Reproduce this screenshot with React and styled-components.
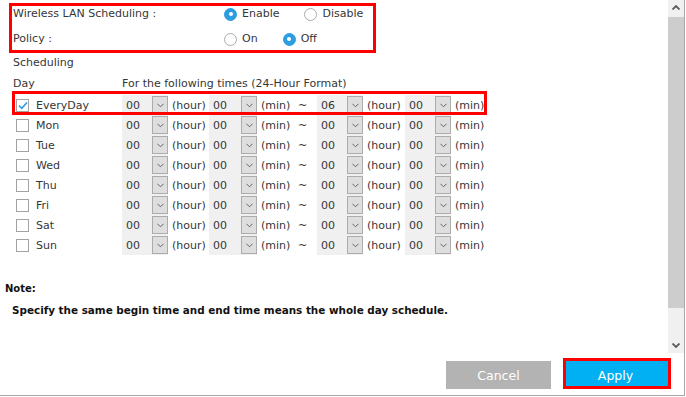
import React from 'react';
import styled, { createGlobalStyle } from 'styled-components';

const GlobalStyle = createGlobalStyle`
  html, body {
    margin: 0;
    padding: 0;
    background: #fff;
  }
  body {
    font-family: "DejaVu Sans", Verdana, sans-serif;
    font-size: 11px;
    color: #363636;
  }
`;

const DAYS = ['EveryDay', 'Mon', 'Tue', 'Wed', 'Thu', 'Fri', 'Sat', 'Sun'];

const Frame = styled.div`
  width: 685px;
  height: 396px;
  box-sizing: border-box;
  border-right: 1px solid #a8a8a8;
  border-bottom: 1px solid #a8a8a8;
  display: flex;
  flex-direction: column;
`;

const Body = styled.div`
  display: flex;
  height: 353px;
  flex-shrink: 0;
`;

const Main = styled.div`
  flex: 1;
  padding-top: 3px;
  overflow: hidden;
`;

// red annotation box around the first settings
const Marked = styled.div`
  margin-left: 9px;
  width: 367px;
  box-sizing: border-box;
  border: 3px solid #ff0000;
  padding: 0 0 3px 1px;
  display: flex;
  flex-direction: column;
  gap: 9px;
`;

const OptionRow = styled.div`
  display: flex;
  align-items: center;
  height: 16px;
  line-height: 16px;
  white-space: nowrap;
`;

const FieldLabel = styled.span`
  width: 211px;
  flex-shrink: 0;
`;

const Option = styled.label`
  display: flex;
  align-items: center;
  flex-shrink: 0;
  gap: 5px;
  margin-right: 25px;

  &:last-child {
    margin-right: 0;
  }
`;

const Radio = styled.span`
  width: 13px;
  height: 13px;
  flex-shrink: 0;
  box-sizing: border-box;
  border-radius: 50%;
  display: flex;
  align-items: center;
  justify-content: center;
  background: ${p => (p.checked ? '#2c9de0' : '#fff')};
  border: 1px solid ${p => (p.checked ? '#2c9de0' : '#ababab')};

  &::before {
    content: "";
    width: 4px;
    height: 4px;
    border-radius: 50%;
    background: ${p => (p.checked ? '#fff' : 'transparent')};
  }
`;

const Title = styled.div`
  margin: 2px 0 0 13px;
  line-height: 16px;
`;

const HeaderRow = styled.div`
  display: grid;
  grid-template-columns: 109px auto;
  margin: 5px 0 3px 13px;
  line-height: 16px;
  height: 16px;
`;

const DayRow = styled.div`
  position: relative;
  display: grid;
  grid-template-columns: 106px 46px 41px 48px 35px 25px 46px 42px 46px 32px;
  align-items: center;
  height: 20px;
  margin-left: 16px;
  width: 467px;

  &::after {
    content: "";
    display: ${p => (p.marked ? 'block' : 'none')};
    position: absolute;
    top: -4px;
    left: -4px;
    right: -4px;
    bottom: 0;
    border: 3px solid #ff0000;
    pointer-events: none;
  }
`;

const DayCell = styled.label`
  display: flex;
  align-items: center;
  gap: 7px;
`;

const Check = styled.span`
  width: 13px;
  height: 13px;
  box-sizing: border-box;
  border: 1px solid #a2a2a2;
  background: #fff;
  display: flex;
  align-items: center;
  justify-content: center;
`;

const Select = styled.div`
  height: 20px;
  background: #f0f0f0;
  display: flex;
  align-items: center;
  justify-content: space-between;
  padding-left: 4px;
`;

const SelectArrow = styled.span`
  width: 16px;
  height: 18px;
  box-sizing: border-box;
  border: 1px solid #acacac;
  background: #dedede;
  display: flex;
  align-items: center;
  justify-content: center;
`;

const Unit = styled.span`
  padding-left: 4px;
`;

const Tilde = styled.span`
  padding-left: 6px;
`;

const NoteTitle = styled.div`
  margin: 27px 0 0 5px;
  font-size: 10px;
  font-weight: bold;
  line-height: 14px;
  color: #111;
`;

const NoteText = styled.div`
  margin: 7px 0 0 12px;
  font-size: 10.4px;
  font-weight: bold;
  line-height: 14px;
  color: #111;
`;

const Scrollbar = styled.div`
  width: 16px;
  background: #f0f0f0;
  display: flex;
  flex-direction: column;
`;

const ScrollButton = styled.div`
  height: 17px;
  flex-shrink: 0;
  display: flex;
  justify-content: center;
  align-items: flex-start;
  padding-top: ${p => p.offset}px;
  box-sizing: border-box;
`;

const Thumb = styled.div`
  height: 291px;
  background: #cdcdcd;
`;

const Track = styled.div`
  flex: 1;
`;

const Footer = styled.div`
  display: flex;
  justify-content: flex-end;
  gap: 12px;
  padding: 8px 16px 0 0;
`;

const Button = styled.button`
  position: relative;
  width: 105px;
  height: 28px;
  border: none;
  margin: 0;
  padding: 0;
  font-family: "DejaVu Sans", Verdana, sans-serif;
  font-size: 12.5px;
  color: #fff;
  background: ${p => (p.primary ? '#00b0f2' : '#b3b3b3')};

  &::after {
    content: "";
    display: ${p => (p.marked ? 'block' : 'none')};
    position: absolute;
    top: -3px;
    left: 0;
    right: -3px;
    bottom: 0;
    border: 3px solid #ff0000;
  }
`;

const Chevron = ({ up, color = '#5a5a5a', w = 8, sw = 1 }) => (
  <svg width={w} height="5" viewBox="0 0 8 5">
    <polyline
      points={up ? '0.5,4.5 4,1 7.5,4.5' : '0.5,0.5 4,4 7.5,0.5'}
      fill="none"
      stroke={color}
      strokeWidth={sw}
    />
  </svg>
);

const TimeSelect = ({ value }) => (
  <Select>
    <span>{value}</span>
    <SelectArrow>
      <Chevron color="#555" w={7} />
    </SelectArrow>
  </Select>
);

const ScheduleRow = ({ day, checked, end }) => (
  <DayRow marked={checked}>
    <DayCell>
      <Check>
        {checked && (
          <svg width="10" height="9" viewBox="0 0 10 9">
            <polyline points="1,4.5 3.8,7.3 9,1.5" fill="none" stroke="#2d9be2" strokeWidth="1.6" />
          </svg>
        )}
      </Check>
      {day}
    </DayCell>
    <TimeSelect value="00" />
    <Unit>(hour)</Unit>
    <TimeSelect value="00" />
    <Unit>(min)</Unit>
    <Tilde>~</Tilde>
    <TimeSelect value={end} />
    <Unit>(hour)</Unit>
    <TimeSelect value="00" />
    <Unit>(min)</Unit>
  </DayRow>
);

export default function App() {
  return (
    <>
      <GlobalStyle />
      <Frame>
        <Body>
          <Main>
            <Marked>
              <OptionRow>
                <FieldLabel>Wireless LAN Scheduling :</FieldLabel>
                <Option><Radio checked />Enable</Option>
                <Option><Radio />Disable</Option>
              </OptionRow>
              <OptionRow>
                <FieldLabel>Policy :</FieldLabel>
                <Option><Radio />On</Option>
                <Option><Radio checked />Off</Option>
              </OptionRow>
            </Marked>

            <Title>Scheduling</Title>
            <HeaderRow>
              <span>Day</span>
              <span>For the following times (24-Hour Format)</span>
            </HeaderRow>
            {DAYS.map((d, i) => (
              <ScheduleRow key={d} day={d} checked={i === 0} end={i === 0 ? '06' : '00'} />
            ))}

            <NoteTitle>Note:</NoteTitle>
            <NoteText>Specify the same begin time and end time means the whole day schedule.</NoteText>
          </Main>
          <Scrollbar>
            <ScrollButton offset={5}><Chevron up sw={1.8} /></ScrollButton>
            <Thumb />
            <Track />
            <ScrollButton offset={7}><Chevron sw={1.8} /></ScrollButton>
          </Scrollbar>
        </Body>
        <Footer>
          <Button>Cancel</Button>
          <Button primary marked>Apply</Button>
        </Footer>
      </Frame>
    </>
  );
}
